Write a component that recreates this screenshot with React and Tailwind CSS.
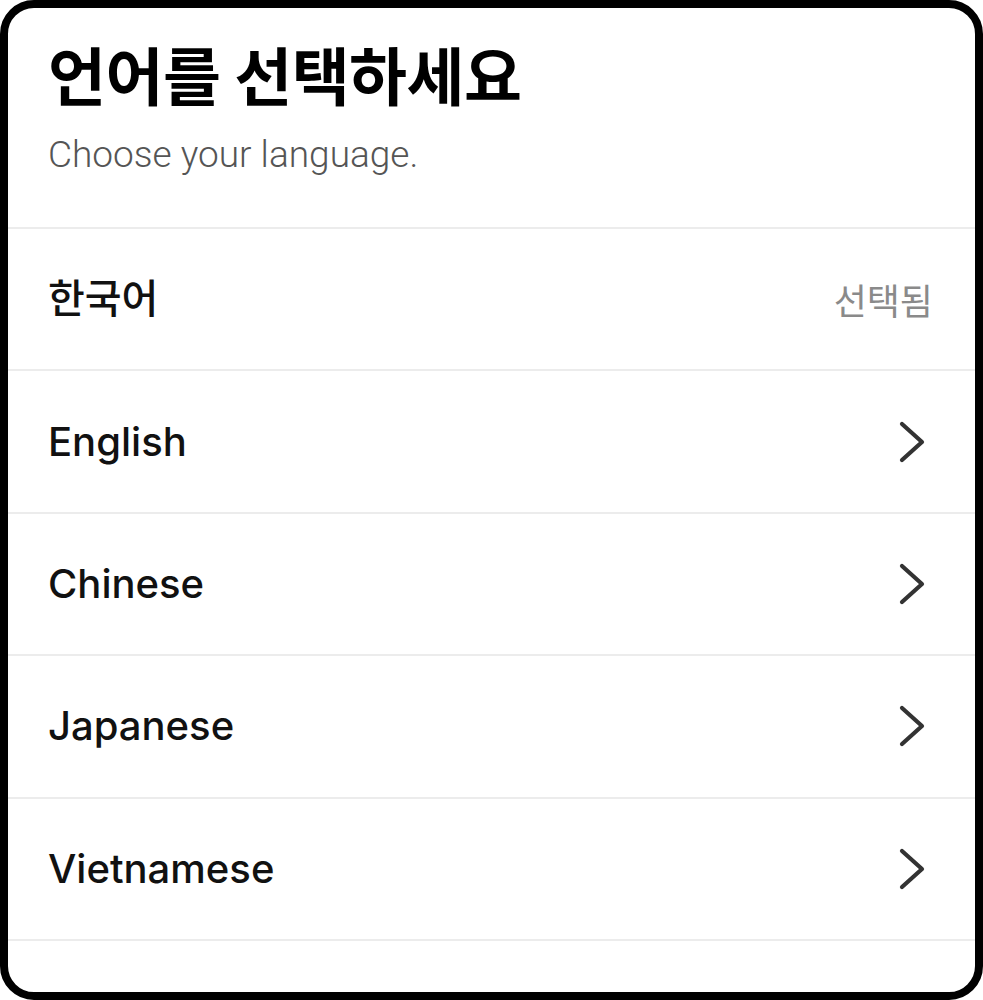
const languages = [
  { label: '한국어', selected: true },
  { label: 'English' },
  { label: 'Chinese' },
  { label: 'Japanese' },
  { label: 'Vietnamese' },
];

function Chevron() {
  return (
    <svg width="30" height="42" viewBox="0 0 30 42" fill="none" className="shrink-0">
      <polyline
        points="4,3 24,21 4,39"
        stroke="#333333"
        strokeWidth="4.2"
        strokeLinecap="round"
        strokeLinejoin="round"
      />
    </svg>
  );
}

export default function App() {
  return (
    <div className="h-[1000px] w-[983px] bg-white font-['Inter','Noto_Sans_CJK_KR',sans-serif]">
      <div className="flex h-full flex-col overflow-hidden rounded-[34px] border-[8px] border-black bg-white">
        <header className="h-[219px] px-[40px] pt-[27px]">
          <h1 className="font-['Noto_Sans_CJK_KR',sans-serif] text-[63px] font-bold leading-[1.2] tracking-[-0.5px] text-black">
            언어를 선택하세요
          </h1>
          <p className="mt-[22px] font-['Roboto',sans-serif] text-[37px] font-light leading-[1.2] text-[#555555]">
            Choose your language.
          </p>
        </header>

        <ul className="border-t-2 border-[#ececec]">
          {languages.map((lang) => (
            <li
              key={lang.label}
              className="flex h-[142.4px] items-center justify-between border-b-2 border-[#ececec] pl-[40px] pr-[42px]"
            >
              <span className="text-[40px] font-medium leading-none text-[#111111]">{lang.label}</span>
              {lang.selected ? (
                <span className="text-[36px] font-['Noto_Sans_CJK_KR',sans-serif] leading-none text-[#8a8a8a]">
                  선택됨
                </span>
              ) : (
                <span className="pr-[5px]">
                  <Chevron />
                </span>
              )}
            </li>
          ))}
        </ul>
      </div>
    </div>
  );
}
